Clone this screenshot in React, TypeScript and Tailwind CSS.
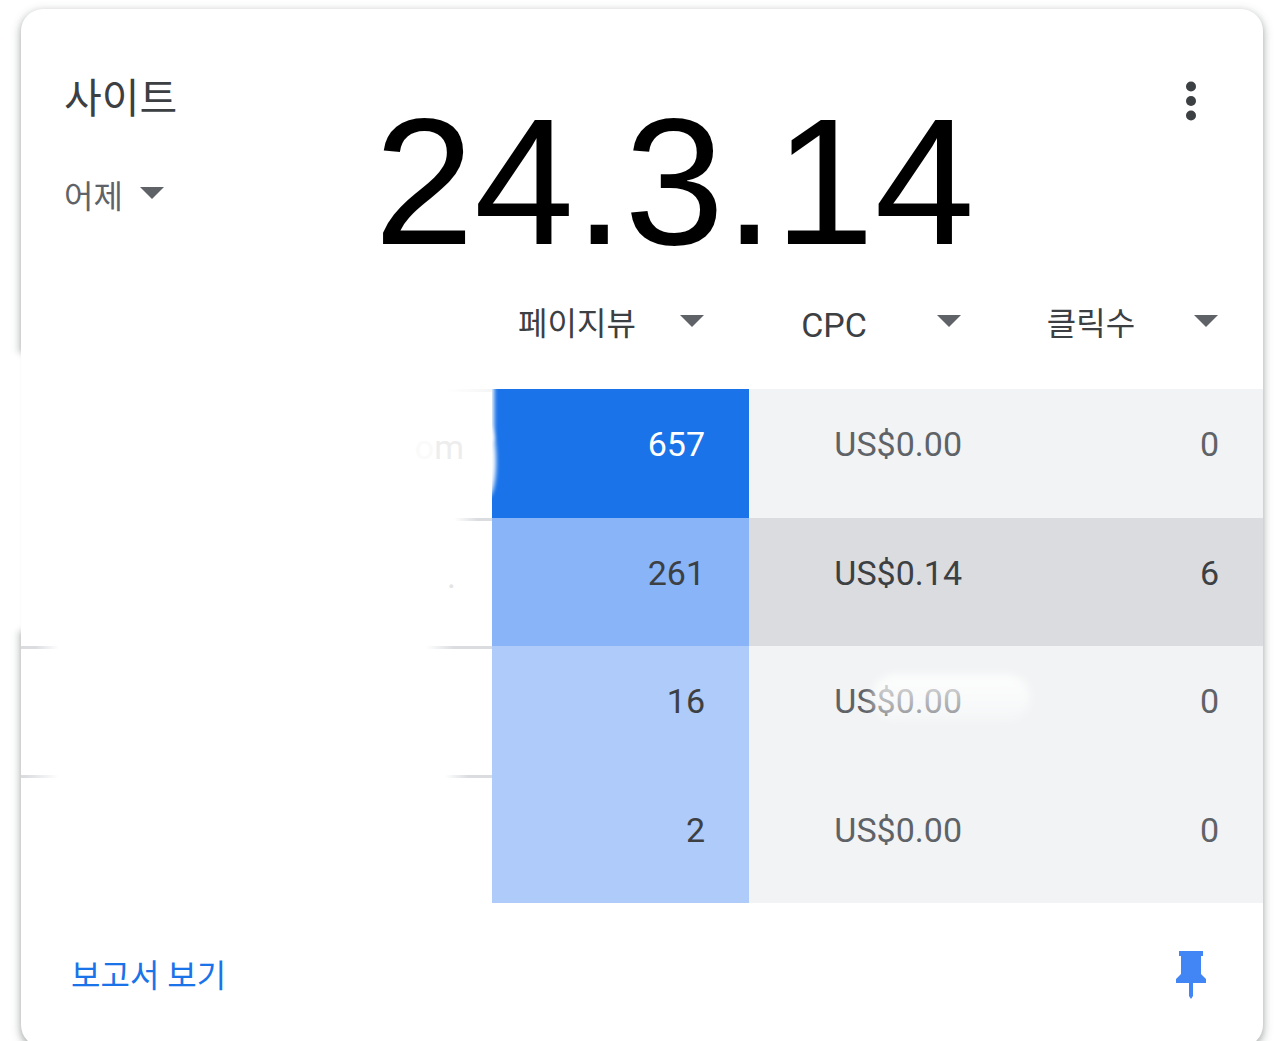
import React from 'react';

interface SiteRow {
  site: React.ReactNode;
  line: string;
  views: string;
  viewsStyle: string;
  cpc: string;
  clicks: string;
  restStyle: string;
}

const rows: SiteRow[] = [
  {
    site: (
      <>
        <span className="text-[#fafafa]">o</span>
        <span className="text-[#ededee]">m</span>
      </>
    ),
    line: 'bg-[linear-gradient(to_right,transparent_90%,#f5f5f6)]',
    views: '657',
    viewsStyle: 'bg-[#1a73e8] text-white',
    cpc: 'US$0.00',
    clicks: '0',
    restStyle: 'bg-[#f1f3f4] text-[#5f6368]',
  },
  {
    site: <span className="pr-2 text-[#e4e4e5]">.</span>,
    line: 'bg-[linear-gradient(to_right,transparent_92%,#dadce0_97%)]',
    views: '261',
    viewsStyle: 'bg-[#8ab4f8] text-[#3c4043]',
    cpc: 'US$0.14',
    clicks: '6',
    restStyle: 'bg-[#dadce0] text-[#3c4043]',
  },
  {
    site: null,
    line: 'bg-[linear-gradient(to_right,#dadce0_3%,transparent_8%,transparent_86%,#dadce0_92%)]',
    views: '16',
    viewsStyle: 'bg-[#aecbfa] text-[#3c4043]',
    cpc: 'US$0.00',
    clicks: '0',
    restStyle: 'bg-[#f1f3f4] text-[#5f6368]',
  },
  {
    site: null,
    line: 'bg-[linear-gradient(to_right,#dadce0_1%,transparent_8%,transparent_90%,#dadce0_95%)]',
    views: '2',
    viewsStyle: 'bg-[#aecbfa] text-[#3c4043]',
    cpc: 'US$0.00',
    clicks: '0',
    restStyle: 'bg-[#f1f3f4] text-[#5f6368]',
  },
];

const metrics = [
  { name: '페이지뷰', size: 'text-[32px]' },
  { name: 'CPC', size: 'text-[34px]' },
  { name: '클릭수', size: 'text-[32px]' },
];

const Arrow: React.FC<{ className?: string }> = ({ className }) => (
  <svg viewBox="0 0 24 12" className={`pointer-events-none h-3 w-6 fill-[#5f6368] ${className ?? ''}`} aria-hidden="true">
    <path d="M0 0h24L12 12z" />
  </svg>
);

const SitesCard: React.FC = () => {
  return (
    <section className="relative rounded-[22px] bg-white shadow-[0_3px_6px_rgba(60,64,67,0.3),0_3px_9px_3px_rgba(60,64,67,0.15)]">
      {/* Faded stretch of the left edge */}
      <div className="absolute top-[344px] -left-5 h-[278px] w-6 bg-white blur-[3px]"></div>

      <header className="flex h-[248px] items-start pl-[43px] pr-12">
        <div className="w-[310px] pt-[66px]">
          <h1 className="text-[41px] leading-[48px] text-[#3c4043]">사이트</h1>
          <div className="relative mt-[50px] w-[100px]">
            <select aria-label="기간" className="h-12 w-full appearance-none bg-transparent text-[32px] text-[#5f6368]">
              <option>어제</option>
            </select>
            <Arrow className="absolute top-3.5 right-0" />
          </div>
        </div>
        <p className="pt-[101px] font-['Liberation_Sans',Arial,sans-serif] text-[180px] leading-[144px] text-black">24.3.14</p>
        <button type="button" aria-label="더보기" className="mt-[68px] ml-auto">
          <svg viewBox="0 0 48 48" className="size-12 fill-[#3c4043]">
            <circle cx="24" cy="9.5" r="5" />
            <circle cx="24" cy="24" r="5" />
            <circle cx="24" cy="38.5" r="5" />
          </svg>
        </button>
      </header>

      <table className="h-[646px] w-full table-fixed">
        <thead>
          <tr className="h-[132px]">
            <th aria-label="사이트" className="w-[471px] p-0"></th>
            {metrics.map((metric) => (
              <th key={metric.name} className="p-0 font-normal">
                <div className="relative">
                  <select
                    aria-label={metric.name}
                    className={`h-[50px] w-full appearance-none bg-transparent pt-0.5 pr-[87px] text-center text-[#3c4043] ${metric.size}`}
                  >
                    <option>{metric.name}</option>
                  </select>
                  <Arrow className="absolute top-[17px] right-[45px]" />
                </div>
              </th>
            ))}
          </tr>
        </thead>
        <tbody className="text-right text-[34px] leading-[38px]">
          {rows.map((row, i) => (
            <tr key={i} className="h-32 align-top">
              <td className="p-0">
                <div className={`h-[3px] ${row.line}`}></div>
                <div className="pt-9 pr-7">{row.site}</div>
              </td>
              <td className={`relative pt-9 pr-11 ${row.viewsStyle}`}>
                {/* Soft notch at the start of the first bar */}
                {i === 0 && (
                  <span className="absolute inset-y-0 left-0 w-4 overflow-hidden">
                    <span className="absolute -top-4 -left-3.5 h-18 w-4 rounded-full bg-white blur-[2px]"></span>
                    <span className="absolute top-9 -left-3 h-18 w-4 rounded-[50%] bg-white blur-[2px]"></span>
                  </span>
                )}
                {row.views}
              </td>
              <td className={`relative pt-9 pr-11 ${row.restStyle}`}>
                {row.cpc}
                {i === 2 && (
                  <span className="absolute top-7 left-[122px] h-12 w-40 rounded-3xl bg-linear-to-b from-white/85 to-white/30 blur-[5px]"></span>
                )}
              </td>
              <td className={`pt-9 pr-11 ${row.restStyle}`}>{row.clicks}</td>
            </tr>
          ))}
        </tbody>
      </table>

      <footer className="flex h-36 items-center justify-between pl-[50px] pr-12">
        <a href="#" className="pt-0.5 text-[32px] text-[#1a73e8]">보고서 보기</a>
        <button type="button" aria-label="고정">
          <svg viewBox="0 0 48 48" className="size-12 fill-[#4285f4]">
            <path d="M12 0h24v5h-2v18l5 5v4H26v13l-2 3-2-3V32H9v-4l5-5V5h-2z" />
          </svg>
        </button>
      </footer>
    </section>
  );
};

export default function App() {
  return (
    <main className="h-screen overflow-hidden bg-white px-[21px] pt-[9px] font-[Roboto,'Noto_Sans_CJK_KR',sans-serif]">
      <SitesCard />
    </main>
  );
}
